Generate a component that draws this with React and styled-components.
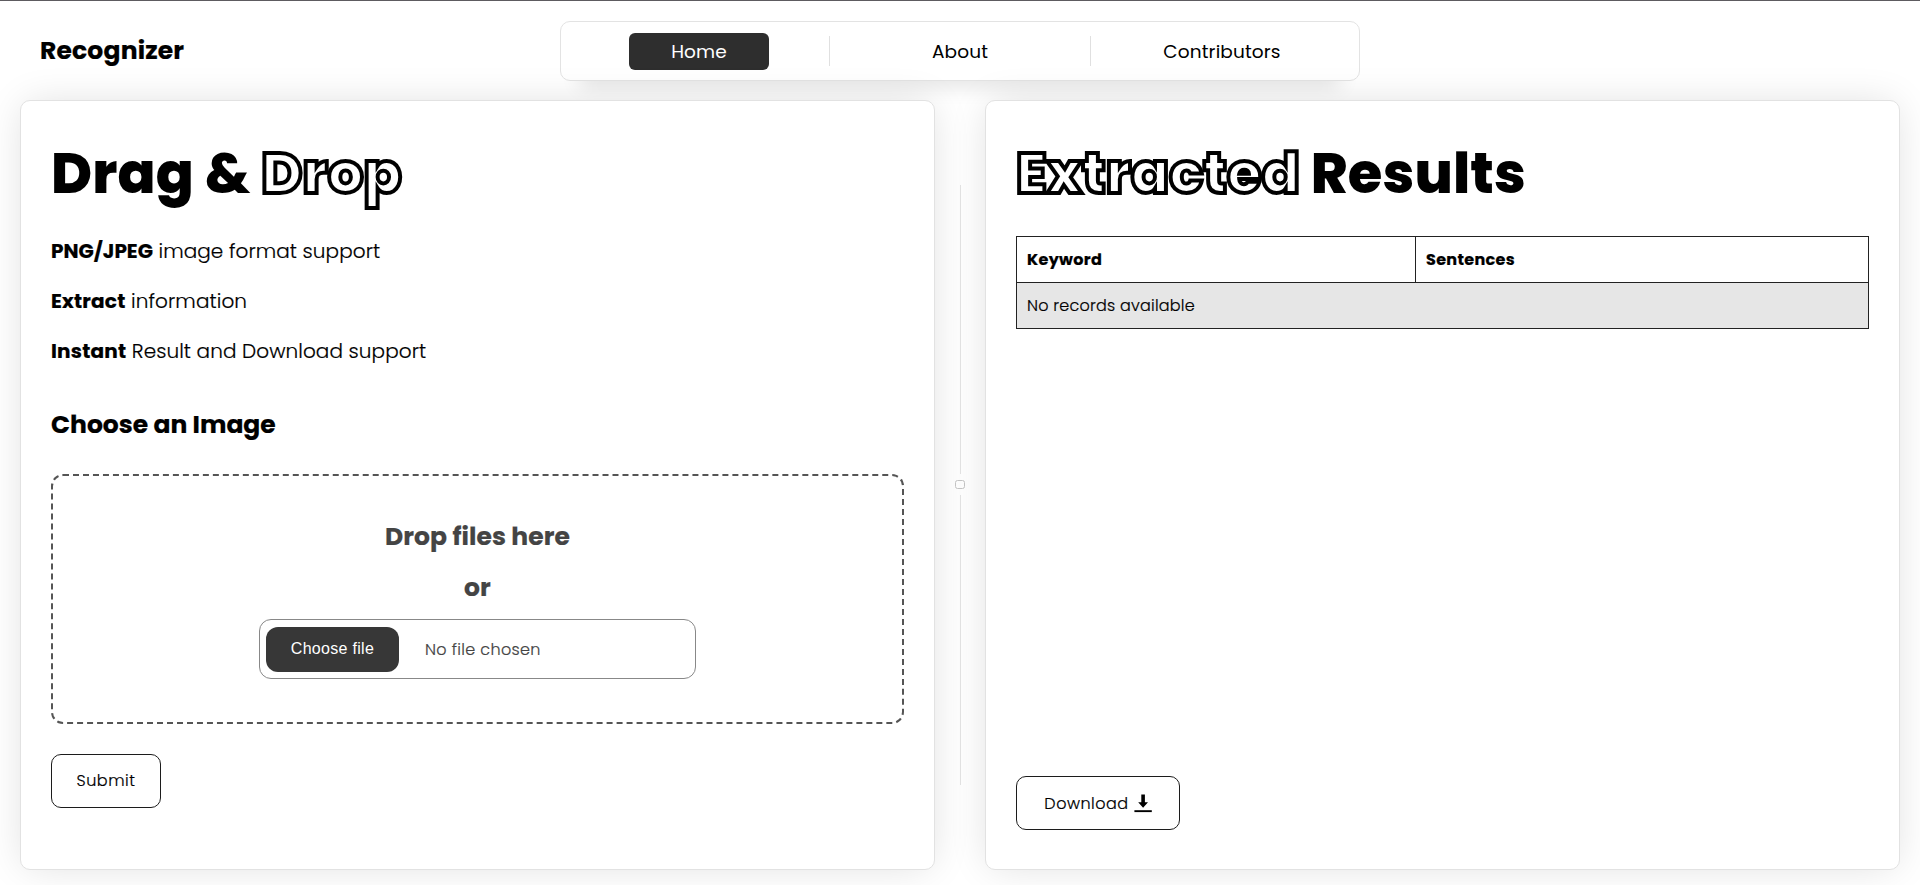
import React from "react";
import styled, { createGlobalStyle } from "styled-components";

const Global = createGlobalStyle`
  * { box-sizing: border-box; margin: 0; padding: 0; }
  body {
    background: #fff;
    color: #000;
    font-family: Poppins, Inter, sans-serif;
    font-weight: 300;
    -webkit-text-stroke: 0.2px currentColor;
  }
`;
const Page = styled.div`
  height: 885px;
  border-top: 1px solid #5d5b60;
  display: flex;
  flex-direction: column;
  overflow: hidden;
`;
const Header = styled.header`
  height: 99px;
  flex: none;
  padding: 20px 40px 0;
  display: grid;
  grid-template-columns: 520px 800px;
  align-items: start;
`;
const Brand = styled.h1`
  font-size: 25px;
  line-height: 60px;
  font-weight: 700;
  letter-spacing: 0.18px;
`;
const Nav = styled.nav`
  height: 60px;
  border: 1px solid #e3e3e3;
  border-radius: 10px;
  background: #fff;
  box-shadow: 0 25px 20px -20px rgba(0, 0, 0, 0.12);
  display: grid;
  grid-template-columns: 269px 261px 1fr;
  align-items: center;
  -webkit-text-stroke: 0;
`;
const NavCell = styled.div`
  height: 30px;
  display: flex;
  align-items: center;
  justify-content: center;
  padding-left: ${(p) => p.$left || 0}px;
  padding-right: ${(p) => p.$right || 0}px;
  border-right: ${(p) => (p.$last ? "0" : "1px solid #e0e0e0")};
`;
const NavLink = styled.a`
  width: 140px;
  height: 37px;
  flex: none;
  border-radius: 6px;
  display: flex;
  align-items: center;
  justify-content: center;
  font-size: 18.5px;
  font-weight: 400;
  letter-spacing: 0.14px;
  color: ${(p) => (p.$active ? "#fff" : "#000")};
  background: ${(p) => (p.$active ? "#2e2e2e" : "transparent")};
`;
const Main = styled.main`
  display: grid;
  grid-template-columns: 915px 50px 915px;
  height: 770px;
  margin-left: 20px;
`;
const Card = styled.section`
  border: 1px solid #e2e2e2;
  border-radius: 10px;
  background: #fff;
  box-shadow: 0 0 40px -5px rgba(0, 0, 0, 0.14);
  padding: 30px;
  display: flex;
  flex-direction: column;
  align-items: flex-start;
`;
const Title = styled.h2`
  padding-top: 1px;
  font-size: 56px;
  line-height: 84px;
  font-weight: 800;
  white-space: nowrap;
  letter-spacing: 0.13px;
  -webkit-text-stroke: 0;
`;
const Outline = styled.span`
  color: #fff;
  -webkit-text-stroke: 4px #000;
`;
const Features = styled.div`
  margin-top: 10px;
`;
const Feature = styled.p`
  font-size: 20px;
  line-height: 50px;
  letter-spacing: ${(p) => p.$ls || 0}px;
`;
const Strong = styled.b`
  font-weight: 700;
  letter-spacing: ${(p) => p.$ls || 0}px;
`;
const Subtitle = styled.h3`
  margin-top: 24px;
  font-size: 25px;
  line-height: 50px;
  font-weight: 700;
`;
const DropZone = styled.div`
  margin-top: 24px;
  width: 853px;
  height: 250px;
  border: 2px dashed #555;
  border-radius: 12px;
  color: #444;
  display: flex;
  flex-direction: column;
  align-items: center;
  padding-top: 35px;
`;
const DropText = styled.div`
  font-size: 25px;
  font-weight: 700;
  line-height: 51px;
  letter-spacing: 0.08px;
`;
const FileField = styled.div`
  margin-top: 6px;
  width: 437px;
  height: 60px;
  border: 1px solid #888;
  border-radius: 12px;
  padding: 0 6px;
  display: flex;
  align-items: center;
  gap: 26px;
  font-size: 16px;
  letter-spacing: 0.35px;
`;
const FileButton = styled.button`
  width: 133px;
  height: 45px;
  border: 0;
  border-radius: 12px;
  background: #373737;
  color: #fff;
  font: 16px "Liberation Sans", Arial, sans-serif;
  letter-spacing: 0.3px;
  -webkit-text-stroke: 0;
`;
const ActionButton = styled.button`
  width: ${(p) => p.$width}px;
  height: 54px;
  margin-top: ${(p) => p.$top};
  padding-bottom: ${(p) => p.$lift || 0}px;
  border: 1px solid #1c1c1c;
  border-radius: 10px;
  background: #fff;
  color: #000;
  font: 300 16px Poppins, Inter, sans-serif;
  letter-spacing: 0.5px;
  display: flex;
  align-items: center;
  justify-content: center;
  gap: 5px;
`;
const Divider = styled.div`
  display: flex;
  flex-direction: column;
  align-items: center;
  padding-top: 85px;
`;
const Line = styled.div`
  width: 1px;
  height: ${(p) => p.$h}px;
  background: #e3e3e3;
`;
const Handle = styled.div`
  width: 10px;
  height: 9px;
  margin: 6px 0;
  border: 1px solid #c4c4c4;
  border-radius: 2.5px;
`;
const Table = styled.table`
  margin-top: 20px;
  width: 853px;
  table-layout: fixed;
  border-collapse: collapse;
  font-size: 16px;
`;
const Cell = styled.td`
  height: 46px;
  width: ${(p) => p.$w || "auto"};
  border: 1px solid #222;
  padding: 0 10px;
  text-align: left;
  font-weight: ${(p) => (p.$head ? 700 : 300)};
  background: ${(p) => (p.$head ? "#fff" : "#e6e6e6")};
  letter-spacing: ${(p) => (p.$head ? 0.32 : 0.22)}px;
`;

const DownloadIcon = () => (
  <svg width="18" height="19" viewBox="0 0 18 19">
    <path d="M7.3 0.5h3.6v7.8h3.1L9.1 13.8 4.2 8.3h3.1z" fill="#000" />
    <path d="M0.4 16.2h17.4v1.9H0.4z" fill="#000" />
  </svg>
);

export default function App() {
  return (
    <Page>
      <Global />
      <Header>
        <Brand>Recognizer</Brand>
        <Nav>
          <NavCell $left={8}><NavLink $active>Home</NavLink></NavCell>
          <NavCell><NavLink>About</NavLink></NavCell>
          <NavCell $last $right={6}><NavLink>Contributors</NavLink></NavCell>
        </Nav>
      </Header>
      <Main>
        <Card>
          <Title>Drag &amp; <Outline>Drop</Outline></Title>
          <Features>
            <Feature $ls={0.08}><Strong>PNG/JPEG</Strong> image format support</Feature>
            <Feature $ls={0.1}><Strong $ls={0.2}>Extract</Strong> information</Feature>
            <Feature $ls={0.08}><Strong $ls={0.2}>Instant</Strong> Result and Download support</Feature>
          </Features>
          <Subtitle>Choose an Image</Subtitle>
          <DropZone>
            <DropText>Drop files here</DropText>
            <DropText>or</DropText>
            <FileField>
              <FileButton>Choose file</FileButton>
              <span>No file chosen</span>
            </FileField>
          </DropZone>
          <ActionButton $width={110} $top="30px" $lift={2}>Submit</ActionButton>
        </Card>
        <Divider>
          <Line $h={289} />
          <Handle />
          <Line $h={290} />
        </Divider>
        <Card>
          <Title><Outline>Extracted</Outline> Results</Title>
          <Table>
            <tbody>
              <tr>
                <Cell as="th" $head $w="399px">Keyword</Cell>
                <Cell as="th" $head>Sentences</Cell>
              </tr>
              <tr>
                <Cell colSpan={2}>No records available</Cell>
              </tr>
            </tbody>
          </Table>
          <ActionButton $width={164} $top="447px">Download <DownloadIcon /></ActionButton>
        </Card>
      </Main>
    </Page>
  );
}
